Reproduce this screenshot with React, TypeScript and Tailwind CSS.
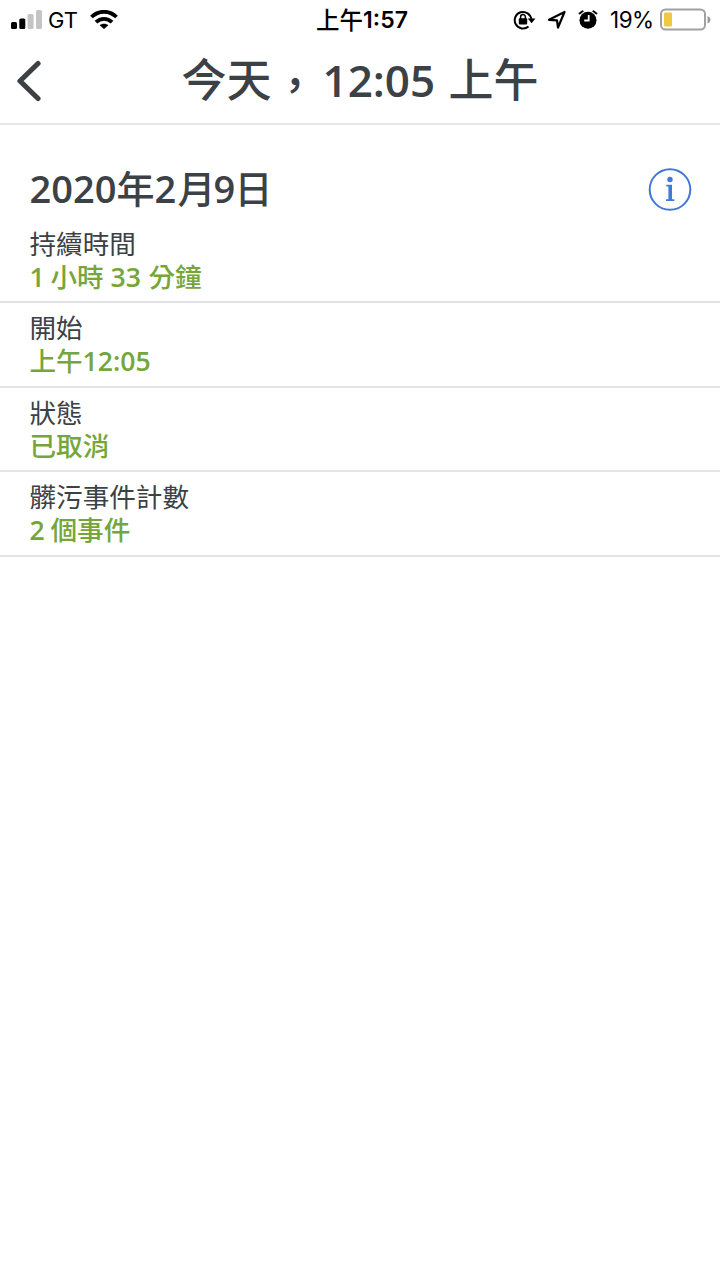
interface Run {
  text: string;
  className?: string;
}

interface DetailRow {
  label: string;
  value: Run[];
}

const DATE: Run[] = [
  { text: "2020", className: "w-[87px] font-semibold" },
  { text: "年", className: "w-[38px]" },
  { text: "2", className: "w-[23px] font-semibold" },
  { text: "月", className: "w-[36px]" },
  { text: "9", className: "w-[21px] font-semibold" },
  { text: "日" },
];

const ROWS: DetailRow[] = [
  {
    label: "持續時間",
    value: [
      { text: "1", className: "w-[21px] font-semibold" },
      { text: "小時", className: "w-[60px]" },
      { text: "33", className: "w-[38px] font-semibold" },
      { text: "分鐘" },
    ],
  },
  {
    label: "開始",
    value: [
      { text: "上午", className: "w-[53px]" },
      { text: "12:05", className: "font-semibold" },
    ],
  },
  { label: "狀態", value: [{ text: "已取消" }] },
  {
    label: "髒污事件計數",
    value: [
      { text: "2", className: "w-[21px] font-semibold" },
      { text: "個事件" },
    ],
  },
];

function StatusBar() {
  return (
    <div className="flex h-10 items-center font-['Inter','Noto_Sans_CJK_TC',sans-serif] text-black">
      <div className="flex w-[240px] items-center pl-[11px]">
        <svg width="31" height="20" viewBox="0 0 31 20">
          <rect x="0" y="12" width="6" height="7" rx="1.5" />
          <rect x="8.3" y="8.5" width="6" height="10.5" rx="1.5" />
          <rect x="16.6" y="4" width="6" height="15" rx="1.5" fill="#c4c4c4" />
          <rect x="25" y="0" width="6" height="19" rx="1.5" fill="#c4c4c4" />
        </svg>
        <span className="ml-[6px] w-[36px] text-[22px] leading-10">GT</span>
        <svg className="ml-[6px]" width="28" height="20" viewBox="0 0 28 20">
          <g fill="none" stroke="#000" strokeWidth="3.8">
            <path d="M1.5 7C8.5 0 19.5 0 26.5 7" />
            <path d="M6 12.2C10.5 7.8 17.5 7.8 22 12.2" />
          </g>
          <path d="M14 19L9.7 15.3C12 13.3 16 13.3 18.3 15.3Z" />
        </svg>
      </div>

      <div className="flex w-[240px] items-center justify-center pl-[4px] text-[23.5px] font-medium leading-10">
        <span className="pt-px">上午</span>
        <span className="text-[23px] font-semibold">1:57</span>
      </div>

      <div className="flex w-[240px] items-center justify-end pr-[9px]">
        {/* 方向鎖定 */}
        <svg width="23" height="20" viewBox="0 0 23 20">
          <path d="M15.5 16.5A8.300 8.300 0 1 1 18.3 9.500" fill="none" stroke="#000" strokeWidth="2" />
          <path d="M14.7 8.5H22.5L18.6 13.3Z" />
          <rect x="5.8" y="8.2" width="8.4" height="6.4" rx="1" />
          <path d="M7.600 9V7A2.400 2.400 0 0 1 12.400 7V9" fill="none" stroke="#000" strokeWidth="1.5" />
        </svg>
        {/* 定位 */}
        <svg className="ml-[11px]" width="20" height="20" viewBox="0 0 20 20">
          <path
            d="M2 9.8L17.5 2L11 17.5L10 10.3Z"
            fill="none"
            stroke="#000"
            strokeWidth="2.2"
            strokeLinejoin="round"
          />
        </svg>
        {/* 鬧鐘 */}
        <svg className="ml-[11px]" width="20" height="20" viewBox="0 0 20 20">
          <circle cx="10" cy="10.3" r="8.5" />
          <path d="M1.6 3.500L4.600 1.300M18.400 3.500L15.400 1.300" stroke="#000" strokeWidth="2" strokeLinecap="round" />
          <path d="M10.7 5V10.5H6.200" fill="none" stroke="#fff" strokeWidth="1.8" />
        </svg>
        <span className="ml-[12px] w-[44px] whitespace-nowrap text-[22.5px] leading-10 tracking-[-0.5px]">19%</span>
        <svg className="ml-[6px]" width="51" height="24" viewBox="0 0 51 24">
          <rect x="1" y="1.5" width="44" height="20" rx="4.5" fill="#fff" stroke="#a0a0a0" strokeWidth="2" />
          <rect x="4" y="4.5" width="8" height="14" rx="1" fill="#efc940" />
          <path d="M47.5 8V15.5Q50.5 14.5 50.5 11.8T47.5 8Z" fill="#9b9b9b" />
        </svg>
      </div>
    </div>
  );
}

function Header() {
  return (
    <header className="flex h-[85px] items-center border-b-2 border-[#e6e6e7] px-[16px] pb-[2px] text-[#3c4146]">
      <button className="w-[40px]" aria-label="返回">
        <svg width="27" height="42" viewBox="0 0 27 42" fill="none" stroke="currentColor" strokeWidth="5.2">
          <path d="M22 3.5L4 21L22 38.5" strokeLinecap="round" strokeLinejoin="round" />
        </svg>
      </button>
      <h1 className="flex flex-1 justify-center pr-[40px] pt-[3px] text-[45px] font-medium leading-[60px]">
        <span className="w-[90px] whitespace-nowrap">今天</span>
        <span className="w-[51px] pl-[2px] pt-[5px] text-[43px]">，</span>
        <span className="w-[126px] text-[44px] font-semibold">12:05</span>
        <span className="whitespace-nowrap">上午</span>
      </h1>
    </header>
  );
}

function Row({ label, value }: DetailRow) {
  return (
    <section className="h-[84.4px] border-b-2 border-[#e2e3e7] pl-[29.5px] pt-[9px] text-[26.6px] leading-[33px]">
      <p className="text-[#3c4146]">{label}</p>
      <p className="flex whitespace-nowrap font-medium text-[#76a63a]">
        {value.map((run) => (
          <span key={run.text} className={run.className}>
            {run.text}
          </span>
        ))}
      </p>
    </section>
  );
}

export default function App() {
  return (
    <main className="min-h-screen w-[720px] bg-white font-['Open_Sans','Noto_Sans_CJK_TC',sans-serif]">
      <StatusBar />
      <Header />

      <div className="flex h-[94px] items-center justify-between pl-[29.5px] pr-[28px] pt-[34px]">
        <h2 className="flex whitespace-nowrap pb-[3px] text-[38px] font-medium leading-[50px] text-[#3c4146]">
          {DATE.map((run, i) => (
            <span key={i} className={run.className}>
              {run.text}
            </span>
          ))}
        </h2>
        <button aria-label="資訊">
          <svg width="44" height="44" viewBox="0 0 44 44" fill="#3f7ad9">
            <circle cx="22" cy="22.5" r="20.3" fill="none" stroke="#3f7ad9" strokeWidth="2" />
            <circle cx="22" cy="12.5" r="2.7" />
            <path d="M18.3 17.8H24V32.2H26.3V34H18V32.2H20.4V19.6H18.3Z" />
          </svg>
        </button>
      </div>

      {ROWS.map((row) => (
        <Row key={row.label} {...row} />
      ))}
    </main>
  );
}
